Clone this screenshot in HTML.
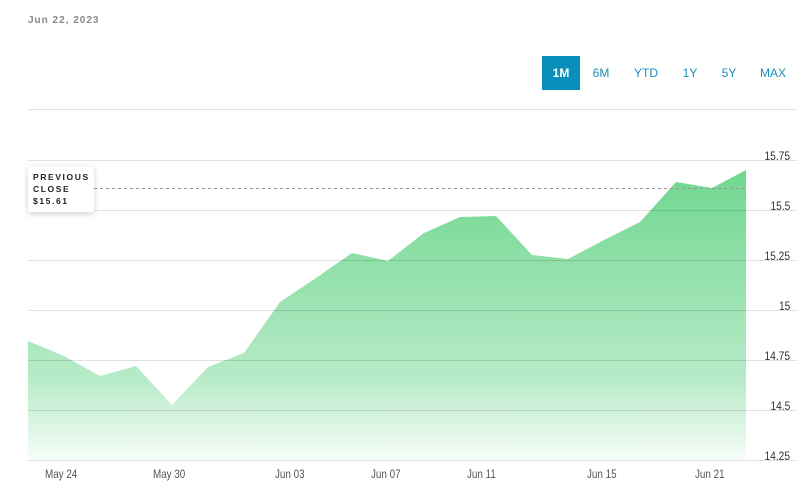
<!DOCTYPE html>
<html><head><meta charset="utf-8"><style>
body{margin:0;width:808px;height:502px;background:#fff;overflow:hidden;font-family:"Liberation Sans",sans-serif;position:relative}
.date{position:absolute;left:28px;top:15px;font-size:10px;color:#888;letter-spacing:1px;font-weight:bold}
.btns{position:absolute;top:56px;left:542px;display:flex}
.btns div{height:34px;line-height:34px;font-size:12px;color:#1a8fb8;text-align:center}
.tip{position:absolute;left:28px;top:166px;width:66px;height:46px;background:#fff;box-shadow:0 2px 6px rgba(0,0,0,.18);font-size:8.5px;letter-spacing:1.6px;color:#222;line-height:12px;padding:5px 0 0 5px;box-sizing:border-box;font-weight:bold}
.yl{position:absolute;right:18px;font-size:12px;color:#333;transform:scaleX(0.85);transform-origin:right center}
.xl{position:absolute;top:467px;font-size:12px;color:#555;transform:scaleX(0.82);transform-origin:left center}
</style></head><body>
<div class="date">Jun 22, 2023</div>
<div class="btns">
<div style="width:38px;background:#0a8fbb;color:#fff;font-weight:bold">1M</div>
<div style="width:42px">6M</div>
<div style="width:48px">YTD</div>
<div style="width:40px">1Y</div>
<div style="width:38px">5Y</div>
<div style="width:50px">MAX</div>
</div>
<svg width="808" height="502" style="position:absolute;left:0;top:0">
<defs><linearGradient id="g" x1="0" y1="170" x2="0" y2="470" gradientUnits="userSpaceOnUse">
<stop offset="0" stop-color="#6fd78f"/><stop offset="0.7" stop-color="#b8ebc8"/><stop offset="1" stop-color="#ffffff"/></linearGradient></defs>
<polygon fill="url(#g)" points="28,341 64,356 100,376 136,366 172,405 208,367 244,353 280,302 316,278 352,253 388,261 424,233 460,217 496,216 532,255 568,259 604,240 640,222 676,182 712,188 746,170 746,460 28,460"/>
<g stroke="rgba(0,0,0,0.12)" stroke-width="1">
<line x1="28" y1="109.5" x2="797" y2="109.5"/>
<line x1="28" y1="160.5" x2="797" y2="160.5"/>
<line x1="28" y1="210.5" x2="797" y2="210.5"/>
<line x1="28" y1="260.5" x2="797" y2="260.5"/>
<line x1="28" y1="310.5" x2="797" y2="310.5"/>
<line x1="28" y1="360.5" x2="797" y2="360.5"/>
<line x1="28" y1="410.5" x2="797" y2="410.5"/>
<line x1="28" y1="460.5" x2="797" y2="460.5"/>
</g>
<line x1="94" y1="188.5" x2="746" y2="188.5" stroke="#999" stroke-dasharray="3,3"/>
</svg>
<div class="tip">PREVIOUS<br>CLOSE<br>$15.61</div>
<div class="yl" style="top:149px">15.75</div>
<div class="yl" style="top:199px">15.5</div>
<div class="yl" style="top:249px">15.25</div>
<div class="yl" style="top:299px">15</div>
<div class="yl" style="top:349px">14.75</div>
<div class="yl" style="top:399px">14.5</div>
<div class="yl" style="top:449px">14.25</div>
<div class="xl" style="left:45px">May 24</div>
<div class="xl" style="left:153px">May 30</div>
<div class="xl" style="left:275px">Jun 03</div>
<div class="xl" style="left:371px">Jun 07</div>
<div class="xl" style="left:467px">Jun 11</div>
<div class="xl" style="left:587px">Jun 15</div>
<div class="xl" style="left:695px">Jun 21</div>
</body></html>
